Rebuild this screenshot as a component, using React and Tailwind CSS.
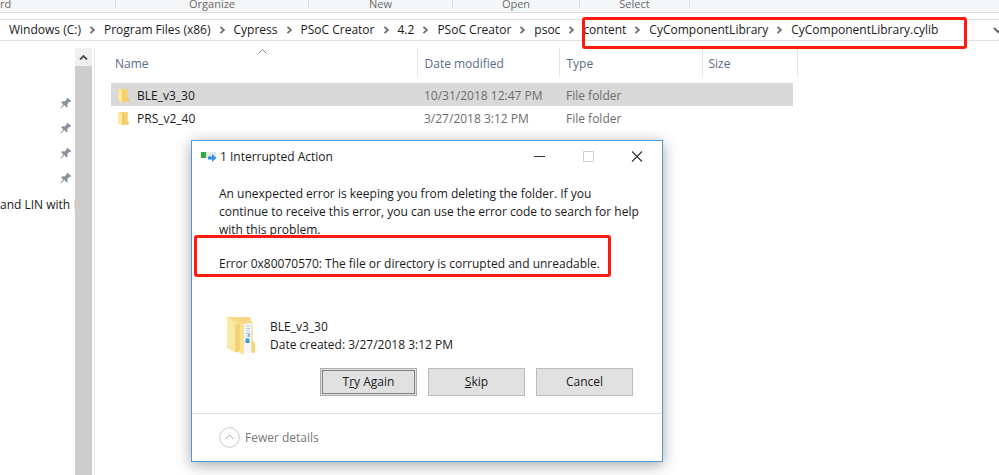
import React from "react";

function Chevron() {
  return (
    <svg width="7" height="8" viewBox="0 0 7 8" fill="none" stroke="#707070" strokeWidth="1.8" className="mx-2 shrink-0" aria-hidden="true">
      <path d="M1.500 .8 4.900 4 1.500 7.200" />
    </svg>
  );
}

function Crumb({ children }) {
  return <a href="#" className="whitespace-nowrap">{children}</a>;
}

function SmallFolder() {
  return (
    <svg width="11" height="15" viewBox="0 0 11 15" className="shrink-0" aria-hidden="true">
      <path d="M.5 1h9.200v9l.8.7v2.800L4.500 14 .5 12.500z" fill="#f7d370" />
      <path d="M.5 1 4.600 2.700V14.300L.5 12.700z" fill="#ffe9a2" />
      <path d="M4.600 2.700 5.400 2.200v11.600l-.8.5z" fill="#e6bc55" />
      <path d="M9.700 10v3.500h.8V10.700z" fill="#e9bd50" />
    </svg>
  );
}

function Pin() {
  return (
    <svg width="12" height="12" viewBox="0 0 12 12" aria-hidden="true">
      <path d="M7.300.7 11.300 4.100 10.400 5l-.9-.2-2.200 2.300.3 2.500-1 .9-2.300-2.400L.9 11.400l-.5-.4 2.900-3.600L1.200 5.200l1-.9 2.500.2L6.800 2.300 6.500 1.500z" fill="#87929e" />
    </svg>
  );
}

function LargeFolder() {
  return (
    <svg width="30" height="39" viewBox="0 0 30 39" className="shrink-0" aria-hidden="true">
      <path d="M1 1h21l2.500 1v3l2 1v19l2.500 2v9.500L18 36 1 32z" fill="#f0cd68" />
      <path d="M1 1h21l2.500 1v4L14 9z" fill="#f6d981" />
      <path d="M17 8l8.500-1.500v31L17 36z" fill="#f3f6f8" />
      <path d="M20 10h4M20 12.500h4M20 15h4M20 17.500h4M20 20h4" stroke="#b7c8d6" />
      <path d="M19.500 22.500h4v4.500h-4z" fill="#3f9bd6" />
      <path d="M22 17h2v4h-2z" fill="#8abfe2" />
      <path d="M26 25l3 2v9.500l-3 .3z" fill="#f4d476" />
      <path d="M1 1l17 7v30.500L1 32z" fill="#fbe293" />
      <path d="M1 1l8 5.500v30L1 32z" fill="#fde9a7" />
      <path d="M9 9l5-2.500v28.500L9 36.500z" fill="#f3d377" />
    </svg>
  );
}

const ribbon = [
  { label: "rd", box: "w-[116px] justify-start" },
  { label: "Organize", box: "w-[193px] justify-center" },
  { label: "New", box: "w-[144px] justify-center" },
  { label: "Open", box: "w-[127px] justify-center" },
  { label: "Select", box: "w-[110px] justify-center" },
];

const files = [
  { name: "BLE_v3_30", date: "10/31/2018 12:47 PM", type: "File folder", row: "bg-[#d9d9d9]" },
  { name: "PRS_v2_40", date: "3/27/2018 3:12 PM", type: "File folder", row: "" },
];

function Ribbon() {
  return (
    <div className="flex h-[13px] overflow-hidden border-b border-[#dcdddf] bg-[#f5f6f7] text-[11px] text-[#6b6b6b]">
      {ribbon.map((g) => (
        <div key={g.label} className={`mb-[3px] flex shrink-0 items-end border-r border-[#e0e1e2] ${g.box}`}>
          <span className="leading-[10px]">{g.label}</span>
        </div>
      ))}
    </div>
  );
}

function AddressBar() {
  return (
    <nav aria-label="Address" className="mt-[6px] flex h-[22px] items-center border-y border-[#dedede] pl-[9px] text-[12px]">
      <Crumb>Windows (C:)</Crumb>
      <Chevron />
      <Crumb>Program Files (x86)</Crumb>
      <Chevron />
      <Crumb>Cypress</Crumb>
      <Chevron />
      <Crumb>PSoC Creator</Crumb>
      <Chevron />
      <Crumb>4.2</Crumb>
      <Chevron />
      <Crumb>PSoC Creator</Crumb>
      <Chevron />
      <Crumb>psoc</Crumb>
      <Chevron />
      <div className="relative flex items-center">
        <Crumb>content</Crumb>
        <Chevron />
        <Crumb>CyComponentLibrary</Crumb>
        <Chevron />
        <Crumb>CyComponentLibrary.cylib</Crumb>
        <span className="absolute -top-1 -right-[29px] -left-px h-8 rounded-[3px] border-[3px] border-[#ff1a0e]" />
      </div>
      <button aria-label="Previous locations" className="-mr-1 ml-auto shrink-0">
        <svg width="10" height="7" viewBox="0 0 10 7" fill="none" stroke="#606060" strokeWidth="1.800">
          <path d="M1 1l4 4 4-4" />
        </svg>
      </button>
    </nav>
  );
}

function Sidebar() {
  return (
    <aside className="flex w-[95px] shrink-0 border-r border-[#ececec]">
      <div className="w-[75px] overflow-hidden pt-[49px]">
        <div className="flex flex-col items-end gap-[13px] pr-[3px]">
          <Pin />
          <Pin />
          <Pin />
          <Pin />
        </div>
        <div className="mt-3 text-[12px] leading-[18px] whitespace-nowrap">
          and LIN with <span className="text-[#f3b98a]">I</span>
        </div>
      </div>
      <div className="flex w-[17px] flex-col bg-[#cdcdcd]">
        <button aria-label="Scroll up" className="flex h-[18px] items-center justify-center bg-[#f0f0f0]">
          <svg width="9" height="7" viewBox="0 0 9 7" fill="none" stroke="#505050" strokeWidth="1.800">
            <path d="M1 5.500 4.500 2 8 5.500" />
          </svg>
        </button>
      </div>
    </aside>
  );
}

function FileList() {
  return (
    <main className="pl-4">
      <table className="w-[686px] table-fixed border-collapse text-left text-[12px]">
        <colgroup>
          <col className="w-[306px]" />
          <col className="w-[142px]" />
          <col className="w-[143px]" />
          <col className="w-[91px]" />
          <col className="w-[4px]" />
        </colgroup>
        <thead className="text-[#5a6b8a]">
          <tr className="h-[29px]">
            <th className="relative border-r border-[#e5e5e5] pt-[2px] pl-1 font-normal">
              Name
              <svg width="9" height="5" viewBox="0 0 9 5" fill="none" stroke="#888" className="absolute top-[1px] left-[147px]" aria-hidden="true">
                <path d="M.5 4.500l4-4 4 4" />
              </svg>
            </th>
            <th className="border-r border-[#e5e5e5] pt-[2px] pl-[7px] font-normal">Date modified</th>
            <th className="border-r border-[#e5e5e5] pt-[2px] pl-[7px] font-normal">Type</th>
            <th colSpan="2" className="border-r border-[#e5e5e5] pt-[2px] pl-[6px] font-normal">Size</th>
          </tr>
          <tr className="h-[6px]" />
        </thead>
        <tbody className="text-[#6d6d6d]">
          {files.map((f) => (
            <tr key={f.name} className="h-[23px]">
              <td className={`p-0 pt-[2px] pl-[7px] text-[#1a1a1a] ${f.row}`}>
                <span className="flex items-center gap-2">
                  <SmallFolder />
                  {f.name}
                </span>
              </td>
              <td className={`p-0 pt-[2px] pl-[7px] ${f.row}`}>{f.date}</td>
              <td className={`p-0 pt-[2px] pl-[7px] ${f.row}`}>{f.type}</td>
              <td className={f.row} />
              <td />
            </tr>
          ))}
        </tbody>
      </table>
    </main>
  );
}

function Dialog() {
  return (
    <section role="dialog" aria-label="1 Interrupted Action" className="absolute top-[140px] left-[191px] w-[472px] border border-[#4a9bdc] bg-white text-[12px] shadow-[0_3px_14px_rgba(0,0,0,0.350)]">
      <header className="flex h-[31px] items-center pl-2">
        <svg width="17" height="11" viewBox="0 0 17 11" aria-hidden="true">
          <path d="M1 1h15v6H1z" fill="#e3e5e6" />
          <path d="M1 1h5v6H1z" fill="#2fae3e" />
          <path d="M8 5.500h4V3l4.500 4-4.500 4V8.500H8z" fill="#3391e0" />
        </svg>
        <h1 className="ml-[3px]">1 Interrupted Action</h1>
        <div className="mr-[19px] ml-auto flex items-center gap-[37px]">
          <button aria-label="Minimize">
            <svg width="12" height="12" viewBox="0 0 12 12" stroke="#333"><path d="M1 5.500h11" /></svg>
          </button>
          <button aria-label="Maximize" disabled>
            <svg width="12" height="12" viewBox="0 0 12 12" fill="none" stroke="#d0d0d0"><path d="M1.500.5h10v10h-10z" /></svg>
          </button>
          <button aria-label="Close">
            <svg width="12" height="12" viewBox="0 0 12 12" stroke="#333" strokeWidth="1.100"><path d="M1 .5l10 10M11 .5l-10 10" /></svg>
          </button>
        </div>
      </header>
      <div className="pt-[13px] pl-[27px] leading-[18px]">
        <p>
          An unexpected error is keeping you from deleting the folder. If you
          <br />
          continue to receive this error, you can use the error code to search for help
          <br />
          with this problem.
        </p>
        <p className="relative mt-4">
          Error 0x80070570: The file or directory is corrupted and unreadable.
          <span className="absolute -top-[20px] right-[51px] -left-[25px] h-[42px] rounded-[3px] border-[3px] border-[#ff1a0e]" />
        </p>
      </div>
      <div className="mt-[43px] flex items-start gap-[14px] pl-[34px] leading-[18px]">
        <LargeFolder />
        <p className="pt-[2px]">
          BLE_v3_30
          <br />
          Date created: 3/27/2018 3:12 PM
        </p>
      </div>
      <div className="mt-[13px] mr-[29px] flex justify-end gap-[11px]">
        <button className="h-7 w-[97px] border border-[#adadad] bg-[#e1e1e1] p-px">
          <span className="flex h-full items-center justify-center border border-[#808080]">
            <span>T<u>r</u>y Again</span>
          </span>
        </button>
        <button className="h-7 w-[97px] border border-[#bcbcbc] bg-[#e1e1e1]"><u>S</u>kip</button>
        <button className="h-7 w-[97px] border border-[#bcbcbc] bg-[#e1e1e1]">Cancel</button>
      </div>
      <footer className="mt-[17px] flex h-12 items-center border-t border-[#dfdfdf] pl-[27px] text-[#777]">
        <button className="flex items-center gap-[5px]">
          <svg width="21" height="21" viewBox="0 0 21 21" fill="none" stroke="#c9c9c9" aria-hidden="true">
            <circle cx="10.500" cy="10.500" r="9.800" />
            <path d="M6.500 12l4-4 4 4" stroke="#aaa" />
          </svg>
          Fewer details
        </button>
      </footer>
    </section>
  );
}

export default function App() {
  return (
    <div className="relative flex min-h-screen flex-col overflow-hidden bg-white font-['Open_Sans','Noto_Sans',sans-serif] text-[#1a1a1a]">
      <Ribbon />
      <AddressBar />
      <div className="mt-[7px] flex grow">
        <Sidebar />
        <FileList />
      </div>
      <Dialog />
    </div>
  );
}
